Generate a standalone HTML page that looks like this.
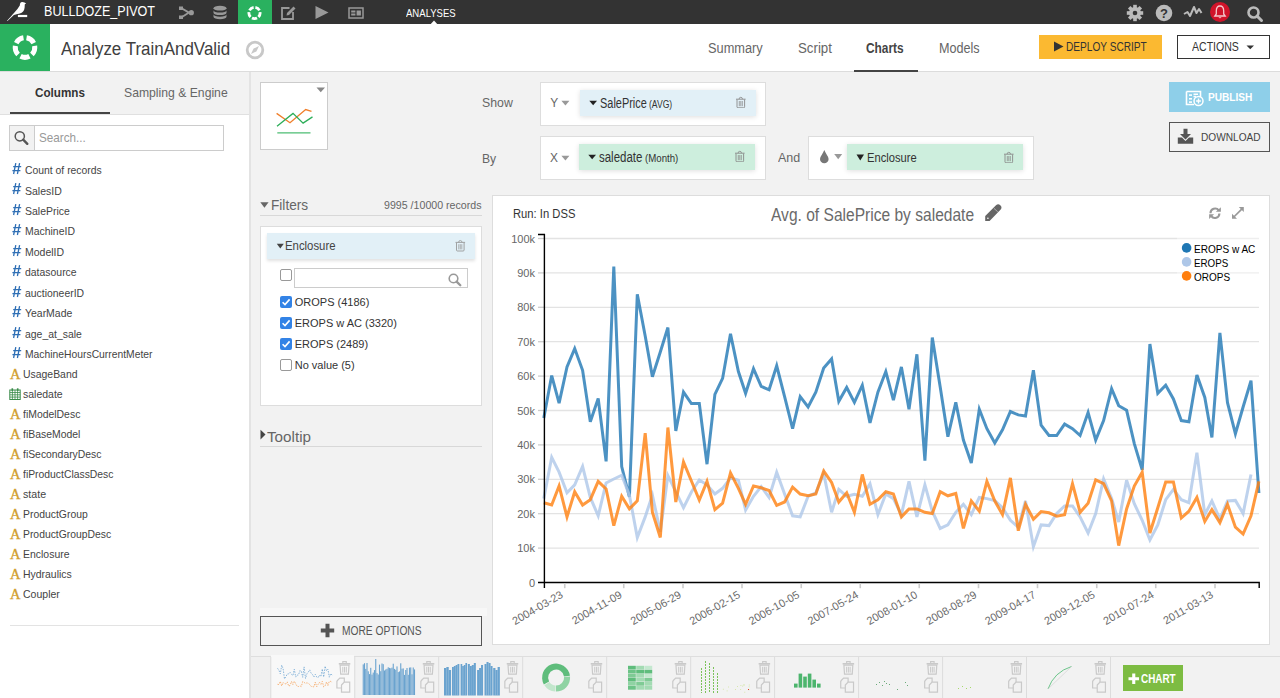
<!DOCTYPE html>
<html><head><meta charset="utf-8"><style>
html,body{margin:0;padding:0;width:1280px;height:698px;overflow:hidden;background:#f2f2f2}
body{position:relative;font-family:"Liberation Sans",sans-serif}
.t{position:absolute;white-space:nowrap;line-height:1;transform-origin:0 0;font-family:"Liberation Sans",sans-serif}
.b{position:absolute;display:block}
</style></head><body>
<div class="b" style="left:0px;top:0px;width:1280px;height:698px;background:#f2f2f2"></div>
<div class="b" style="left:0px;top:0px;width:1280px;height:24px;background:#333"></div>
<svg class="b" style="left:0px;top:0px" width="36" height="24" viewBox="0 0 36 24"><path d="M6.9 20.9 L7.5 20.9 L13.9 14.9 C15.5 14.4 17.5 14.1 19.8 13.6 C22.6 12.9 24.2 11 24.6 7.8 L24.8 4.3 L26.1 3.4 C25.2 2.7 24 1.9 22.2 1.9 C20.7 1.9 19.9 3 19.8 5.4 C17.5 9.5 11.5 15.5 6.9 20.9 Z" fill="#fff"/><rect x="17.9" y="14.9" width="9.3" height="2.2" fill="#fff"/></svg>
<div class="t" style="left:44.05px;top:3.36px;font-size:15.41px;font-weight:400;color:#fff;transform:scaleX(0.8154);">BULLDOZE_PIVOT</div>
<svg class="b" style="left:178px;top:5px" width="18" height="16" viewBox="0 0 18 16"><rect x="1" y="1.5" width="4" height="3.5" fill="#999"/><rect x="1" y="10.5" width="4" height="3.5" fill="#999"/><path d="M4 3.5 L11 7.6 L4 12" stroke="#999" stroke-width="1.8" fill="none"/><circle cx="13.3" cy="7.7" r="2.6" fill="#999"/></svg>
<svg class="b" style="left:212px;top:5px" width="16" height="16" viewBox="0 0 16 16"><ellipse cx="8" cy="3.2" rx="6.5" ry="2.4" fill="#999"/><path d="M1.5 5.2 v2.5 a6.5 2.4 0 0 0 13 0 v-2.5 a6.5 2.4 0 0 1 -13 0z" fill="#999"/><path d="M1.5 9.3 v2.5 a6.5 2.4 0 0 0 13 0 v-2.5 a6.5 2.4 0 0 1 -13 0z" fill="#999"/></svg>
<div class="b" style="left:238px;top:0px;width:34px;height:24px;background:#2ab15f"></div>
<svg class="b" style="left:238px;top:0px" width="34" height="24" viewBox="0 0 34 24"><path d="M17.38 7.47 A5.6 5.6 0 0 1 21.49 10.46 M22.03 12.12 A5.6 5.6 0 0 1 20.46 16.96 M19.04 17.99 A5.6 5.6 0 0 1 13.96 17.99 M12.54 16.96 A5.6 5.6 0 0 1 10.97 12.12 M11.51 10.46 A5.6 5.6 0 0 1 15.62 7.47" stroke="#fff" stroke-width="2.8" fill="none"/></svg>
<svg class="b" style="left:280px;top:5px" width="17" height="16" viewBox="0 0 17 16"><path d="M9.5 3 H2 V14 H13 V7" stroke="#999" stroke-width="1.8" fill="none"/><path d="M6.5 10.5 L7 8 L13.5 1.5 L15.5 3.5 L9 10 Z" fill="#999"/></svg>
<svg class="b" style="left:314px;top:5px" width="16" height="16" viewBox="0 0 16 16"><path d="M1.5 1 L14.5 7.5 L1.5 14 Z" fill="#999"/></svg>
<svg class="b" style="left:348px;top:7px" width="17" height="12" viewBox="0 0 17 12"><rect x="1" y="1" width="14" height="10" stroke="#999" stroke-width="1.5" fill="none"/><rect x="3.2" y="3.5" width="4.2" height="2" fill="#999"/><rect x="3.2" y="6.5" width="4.2" height="2" fill="#999"/><rect x="8.6" y="3.5" width="4.3" height="5" fill="#999"/></svg>
<div class="t" style="left:405.73px;top:7.98px;font-size:11.48px;font-weight:400;color:#fff;transform:scaleX(0.8324);">ANALYSES</div>
<svg class="b" style="left:430px;top:20px" width="8" height="4" viewBox="0 0 8 4"><path d="M0.8 4 L4 0.6 L7.2 4 Z" fill="#fff"/></svg>
<svg class="b" style="left:1126px;top:4px" width="18" height="18" viewBox="0 0 18 18"><g fill="#bbb"><circle cx="9" cy="9" r="6"/><rect x="7.2" y="0.8" width="3.6" height="4" transform="rotate(0 9 9)"/><rect x="7.2" y="0.8" width="3.6" height="4" transform="rotate(45 9 9)"/><rect x="7.2" y="0.8" width="3.6" height="4" transform="rotate(90 9 9)"/><rect x="7.2" y="0.8" width="3.6" height="4" transform="rotate(135 9 9)"/><rect x="7.2" y="0.8" width="3.6" height="4" transform="rotate(180 9 9)"/><rect x="7.2" y="0.8" width="3.6" height="4" transform="rotate(225 9 9)"/><rect x="7.2" y="0.8" width="3.6" height="4" transform="rotate(270 9 9)"/><rect x="7.2" y="0.8" width="3.6" height="4" transform="rotate(315 9 9)"/></g><circle cx="9" cy="9" r="2.3" fill="#333"/></svg>
<svg class="b" style="left:1155px;top:4px" width="18" height="18" viewBox="0 0 18 18"><circle cx="9" cy="9" r="8.3" fill="#bbb"/><text x="9" y="13.6" text-anchor="middle" font-family="Liberation Sans" font-weight="700" font-size="13" fill="#333">?</text></svg>
<svg class="b" style="left:1183px;top:4px" width="20" height="14" viewBox="0 0 20 14"><path d="M1 10 L4.5 8 L7 12 L11 3 L13.5 9 L16 5 L18.5 9" stroke="#bbb" stroke-width="2" fill="none" stroke-linejoin="round"/></svg>
<svg class="b" style="left:1210px;top:2px" width="20" height="20" viewBox="0 0 20 20"><circle cx="10" cy="10" r="10" fill="#d0142a"/><path d="M10 4 C7 4 6.3 6.5 6.3 9 L6.3 12 L4.8 14 L15.2 14 L13.7 12 L13.7 9 C13.7 6.5 13 4 10 4Z" fill="none" stroke="#f4c9cd" stroke-width="1.3"/><path d="M8.5 15.2 a1.6 1.6 0 0 0 3 0z" fill="#f4c9cd"/></svg>
<svg class="b" style="left:1246px;top:5px" width="18" height="18" viewBox="0 0 18 18"><circle cx="7.5" cy="7.5" r="5" stroke="#bbb" stroke-width="2.6" fill="none"/><path d="M11 11 L15.5 15.5" stroke="#bbb" stroke-width="3" stroke-linecap="round"/></svg>
<div class="b" style="left:0px;top:24px;width:1280px;height:47px;background:#fff"></div>
<div class="b" style="left:0px;top:71px;width:1280px;height:1px;background:#dcdcdc"></div>
<div class="b" style="left:0px;top:24px;width:50px;height:47px;background:#2ab15f"></div>
<svg class="b" style="left:0px;top:24px" width="50" height="47" viewBox="0 0 50 47"><path d="M26.53 13.82 A9.8 9.8 0 0 1 33.73 19.05 M34.68 21.97 A9.8 9.8 0 0 1 31.93 30.43 M29.45 32.23 A9.8 9.8 0 0 1 20.55 32.23 M18.07 30.43 A9.8 9.8 0 0 1 15.32 21.97 M16.27 19.05 A9.8 9.8 0 0 1 23.47 13.82" stroke="#fff" stroke-width="5" fill="none"/></svg>
<div class="t" style="left:60.98px;top:40.04px;font-size:18.02px;font-weight:400;color:#404040;transform:scaleX(0.9408);">Analyze TrainAndValid</div>
<svg class="b" style="left:245px;top:40px" width="20" height="20" viewBox="0 0 20 20"><circle cx="10" cy="10" r="7.8" stroke="#c8c8c8" stroke-width="2.8" fill="none"/><path d="M14 6 L11.4 11.4 L6 14 L8.6 8.6 Z" fill="#c8c8c8"/></svg>
<div class="t" style="left:707.83px;top:42.21px;font-size:13.81px;font-weight:400;color:#666;transform:scaleX(0.9263);">Summary</div>
<div class="t" style="left:797.70px;top:42.21px;font-size:13.81px;font-weight:400;color:#666;transform:scaleX(0.9622);">Script</div>
<div class="t" style="left:866.49px;top:42.21px;font-size:13.81px;font-weight:700;color:#444;transform:scaleX(0.8608);">Charts</div>
<div class="t" style="left:939.34px;top:42.21px;font-size:13.81px;font-weight:400;color:#666;transform:scaleX(0.9145);">Models</div>
<div class="b" style="left:854px;top:70px;width:64px;height:2px;background:#444"></div>
<div class="b" style="left:1039px;top:35px;width:123px;height:24px;background:#fbb931"></div>
<svg class="b" style="left:1053px;top:41px" width="12" height="12" viewBox="0 0 12 12"><path d="M1 0.5 L10.5 5.5 L1 10.5Z" fill="#333"/></svg>
<div class="t" style="left:1066.09px;top:41.46px;font-size:12.21px;font-weight:400;color:#333;transform:scaleX(0.8290);">DEPLOY SCRIPT</div>
<div class="b" style="left:1177px;top:35px;width:93px;height:24px;border:1.5px solid #333;box-sizing:border-box;background:#fff"></div>
<div class="t" style="left:1192.37px;top:41.46px;font-size:12.21px;font-weight:400;color:#333;transform:scaleX(0.8632);">ACTIONS</div>
<svg class="b" style="left:1246px;top:45px" width="9" height="5" viewBox="0 0 9 5"><path d="M0.5 0.5 L8 0.5 L4.25 4.2Z" fill="#333"/></svg>
<div class="b" style="left:0px;top:72px;width:250px;height:626px;background:#fff"></div>
<div class="b" style="left:0px;top:72px;width:250px;height:42px;background:#f2f2f2"></div>
<div class="b" style="left:0px;top:114px;width:250px;height:1px;background:#e0e0e0"></div>
<div class="b" style="left:249px;top:72px;width:2px;height:626px;background:#e3e3e3"></div>
<div class="t" style="left:34.70px;top:86.75px;font-size:12.94px;font-weight:700;color:#333;transform:scaleX(0.9023);">Columns</div>
<div class="t" style="left:123.77px;top:86.75px;font-size:12.94px;font-weight:400;color:#666;transform:scaleX(0.9422);">Sampling &amp; Engine</div>
<div class="b" style="left:10px;top:112px;width:100px;height:2px;background:#444"></div>
<div class="b" style="left:9px;top:125px;width:215px;height:26px;border:1px solid #ccc;box-sizing:border-box;background:#fff"></div>
<div class="b" style="left:10px;top:126px;width:24px;height:24px;background:#f2f2f2;border-right:1px solid #ccc"></div>
<svg class="b" style="left:13px;top:130px" width="18" height="16" viewBox="0 0 18 16"><circle cx="6.8" cy="6.3" r="4.6" stroke="#555" stroke-width="1.5" fill="none"/><path d="M10.2 9.7 L14.3 13.8" stroke="#555" stroke-width="2.4" stroke-linecap="round"/></svg>
<div class="t" style="left:38.80px;top:131.08px;font-size:13.37px;font-weight:400;color:#999;transform:scaleX(0.8752);">Search...</div>
<svg class="b" style="left:11px;top:161.6px" width="11" height="13" viewBox="0 0 11 13"><path d="M4.8 1.2 L2.6 12 M8.6 1.2 L6.4 12 M2.2 4.6 H10.2 M1.4 8.6 H9.4" stroke="#2f6fb5" stroke-width="1.3" fill="none"/></svg>
<div class="t" style="left:24.88px;top:164.83px;font-size:11.19px;font-weight:400;color:#444;transform:scaleX(0.9280);">Count of records</div>
<svg class="b" style="left:11px;top:182.3px" width="11" height="13" viewBox="0 0 11 13"><path d="M4.8 1.2 L2.6 12 M8.6 1.2 L6.4 12 M2.2 4.6 H10.2 M1.4 8.6 H9.4" stroke="#2f6fb5" stroke-width="1.3" fill="none"/></svg>
<div class="t" style="left:24.87px;top:185.53px;font-size:11.19px;font-weight:400;color:#444;transform:scaleX(0.9395);">SalesID</div>
<svg class="b" style="left:11px;top:202.9px" width="11" height="13" viewBox="0 0 11 13"><path d="M4.8 1.2 L2.6 12 M8.6 1.2 L6.4 12 M2.2 4.6 H10.2 M1.4 8.6 H9.4" stroke="#2f6fb5" stroke-width="1.3" fill="none"/></svg>
<div class="t" style="left:24.87px;top:206.13px;font-size:11.19px;font-weight:400;color:#444;transform:scaleX(0.9355);">SalePrice</div>
<svg class="b" style="left:11px;top:223.2px" width="11" height="13" viewBox="0 0 11 13"><path d="M4.8 1.2 L2.6 12 M8.6 1.2 L6.4 12 M2.2 4.6 H10.2 M1.4 8.6 H9.4" stroke="#2f6fb5" stroke-width="1.3" fill="none"/></svg>
<div class="t" style="left:24.87px;top:226.43px;font-size:11.19px;font-weight:400;color:#444;transform:scaleX(0.9336);">MachineID</div>
<svg class="b" style="left:11px;top:243.8px" width="11" height="13" viewBox="0 0 11 13"><path d="M4.8 1.2 L2.6 12 M8.6 1.2 L6.4 12 M2.2 4.6 H10.2 M1.4 8.6 H9.4" stroke="#2f6fb5" stroke-width="1.3" fill="none"/></svg>
<div class="t" style="left:24.87px;top:247.03px;font-size:11.19px;font-weight:400;color:#444;transform:scaleX(0.9382);">ModelID</div>
<svg class="b" style="left:11px;top:264.1px" width="11" height="13" viewBox="0 0 11 13"><path d="M4.8 1.2 L2.6 12 M8.6 1.2 L6.4 12 M2.2 4.6 H10.2 M1.4 8.6 H9.4" stroke="#2f6fb5" stroke-width="1.3" fill="none"/></svg>
<div class="t" style="left:24.87px;top:267.33px;font-size:11.19px;font-weight:400;color:#444;transform:scaleX(0.9331);">datasource</div>
<svg class="b" style="left:11px;top:284.7px" width="11" height="13" viewBox="0 0 11 13"><path d="M4.8 1.2 L2.6 12 M8.6 1.2 L6.4 12 M2.2 4.6 H10.2 M1.4 8.6 H9.4" stroke="#2f6fb5" stroke-width="1.3" fill="none"/></svg>
<div class="t" style="left:24.87px;top:287.93px;font-size:11.19px;font-weight:400;color:#444;transform:scaleX(0.9311);">auctioneerID</div>
<svg class="b" style="left:11px;top:305.0px" width="11" height="13" viewBox="0 0 11 13"><path d="M4.8 1.2 L2.6 12 M8.6 1.2 L6.4 12 M2.2 4.6 H10.2 M1.4 8.6 H9.4" stroke="#2f6fb5" stroke-width="1.3" fill="none"/></svg>
<div class="t" style="left:24.87px;top:308.23px;font-size:11.19px;font-weight:400;color:#444;transform:scaleX(0.9345);">YearMade</div>
<svg class="b" style="left:11px;top:325.7px" width="11" height="13" viewBox="0 0 11 13"><path d="M4.8 1.2 L2.6 12 M8.6 1.2 L6.4 12 M2.2 4.6 H10.2 M1.4 8.6 H9.4" stroke="#2f6fb5" stroke-width="1.3" fill="none"/></svg>
<div class="t" style="left:24.87px;top:328.93px;font-size:11.19px;font-weight:400;color:#444;transform:scaleX(0.9317);">age_at_sale</div>
<svg class="b" style="left:11px;top:346.0px" width="11" height="13" viewBox="0 0 11 13"><path d="M4.8 1.2 L2.6 12 M8.6 1.2 L6.4 12 M2.2 4.6 H10.2 M1.4 8.6 H9.4" stroke="#2f6fb5" stroke-width="1.3" fill="none"/></svg>
<div class="t" style="left:24.88px;top:349.23px;font-size:11.19px;font-weight:400;color:#444;transform:scaleX(0.9240);">MachineHoursCurrentMeter</div>
<div class="t" style="left:10.1px;top:366.90px;font-family:'Liberation Serif',serif;font-size:14.5px;line-height:14.5px;color:#d19e2e;font-weight:400;-webkit-text-stroke:0.35px #d19e2e">A</div>
<div class="t" style="left:22.87px;top:368.93px;font-size:11.19px;font-weight:400;color:#444;transform:scaleX(0.9323);">UsageBand</div>
<svg class="b" style="left:9px;top:387.7px" width="12" height="12" viewBox="0 0 12 12"><rect x="0.8" y="2" width="10.4" height="9.5" fill="none" stroke="#3a8c4a" stroke-width="1"/><path d="M0.8 4.5 H11.2 M0.8 6.8 H11.2 M0.8 9.1 H11.2 M3.4 2 V11.5 M6 2 V11.5 M8.6 2 V11.5" stroke="#3a8c4a" stroke-width="0.8"/><rect x="2.5" y="0.3" width="1.6" height="2.5" fill="#3a8c4a"/><rect x="7.9" y="0.3" width="1.6" height="2.5" fill="#3a8c4a"/></svg>
<div class="t" style="left:22.87px;top:388.93px;font-size:11.19px;font-weight:400;color:#444;transform:scaleX(0.9378);">saledate</div>
<div class="t" style="left:10.1px;top:406.90px;font-family:'Liberation Serif',serif;font-size:14.5px;line-height:14.5px;color:#d19e2e;font-weight:400;-webkit-text-stroke:0.35px #d19e2e">A</div>
<div class="t" style="left:22.87px;top:408.93px;font-size:11.19px;font-weight:400;color:#444;transform:scaleX(0.9315);">fiModelDesc</div>
<div class="t" style="left:10.1px;top:426.90px;font-family:'Liberation Serif',serif;font-size:14.5px;line-height:14.5px;color:#d19e2e;font-weight:400;-webkit-text-stroke:0.35px #d19e2e">A</div>
<div class="t" style="left:22.87px;top:428.93px;font-size:11.19px;font-weight:400;color:#444;transform:scaleX(0.9315);">fiBaseModel</div>
<div class="t" style="left:10.1px;top:446.90px;font-family:'Liberation Serif',serif;font-size:14.5px;line-height:14.5px;color:#d19e2e;font-weight:400;-webkit-text-stroke:0.35px #d19e2e">A</div>
<div class="t" style="left:22.88px;top:448.93px;font-size:11.19px;font-weight:400;color:#444;transform:scaleX(0.9278);">fiSecondaryDesc</div>
<div class="t" style="left:10.1px;top:467.00px;font-family:'Liberation Serif',serif;font-size:14.5px;line-height:14.5px;color:#d19e2e;font-weight:400;-webkit-text-stroke:0.35px #d19e2e">A</div>
<div class="t" style="left:22.88px;top:469.03px;font-size:11.19px;font-weight:400;color:#444;transform:scaleX(0.9265);">fiProductClassDesc</div>
<div class="t" style="left:10.1px;top:487.00px;font-family:'Liberation Serif',serif;font-size:14.5px;line-height:14.5px;color:#d19e2e;font-weight:400;-webkit-text-stroke:0.35px #d19e2e">A</div>
<div class="t" style="left:22.86px;top:489.03px;font-size:11.19px;font-weight:400;color:#444;transform:scaleX(0.9532);">state</div>
<div class="t" style="left:10.1px;top:507.00px;font-family:'Liberation Serif',serif;font-size:14.5px;line-height:14.5px;color:#d19e2e;font-weight:400;-webkit-text-stroke:0.35px #d19e2e">A</div>
<div class="t" style="left:22.88px;top:509.03px;font-size:11.19px;font-weight:400;color:#444;transform:scaleX(0.9299);">ProductGroup</div>
<div class="t" style="left:10.1px;top:527.10px;font-family:'Liberation Serif',serif;font-size:14.5px;line-height:14.5px;color:#d19e2e;font-weight:400;-webkit-text-stroke:0.35px #d19e2e">A</div>
<div class="t" style="left:22.88px;top:529.13px;font-size:11.19px;font-weight:400;color:#444;transform:scaleX(0.9267);">ProductGroupDesc</div>
<div class="t" style="left:10.1px;top:546.70px;font-family:'Liberation Serif',serif;font-size:14.5px;line-height:14.5px;color:#d19e2e;font-weight:400;-webkit-text-stroke:0.35px #d19e2e">A</div>
<div class="t" style="left:22.87px;top:548.73px;font-size:11.19px;font-weight:400;color:#444;transform:scaleX(0.9348);">Enclosure</div>
<div class="t" style="left:10.1px;top:566.70px;font-family:'Liberation Serif',serif;font-size:14.5px;line-height:14.5px;color:#d19e2e;font-weight:400;-webkit-text-stroke:0.35px #d19e2e">A</div>
<div class="t" style="left:22.87px;top:568.73px;font-size:11.19px;font-weight:400;color:#444;transform:scaleX(0.9340);">Hydraulics</div>
<div class="t" style="left:10.1px;top:586.70px;font-family:'Liberation Serif',serif;font-size:14.5px;line-height:14.5px;color:#d19e2e;font-weight:400;-webkit-text-stroke:0.35px #d19e2e">A</div>
<div class="t" style="left:22.87px;top:588.73px;font-size:11.19px;font-weight:400;color:#444;transform:scaleX(0.9395);">Coupler</div>
<div class="b" style="left:10px;top:625px;width:229px;height:1px;background:#e3e3e3"></div>
<div class="b" style="left:260px;top:82px;width:68px;height:68px;border:1px solid #ccc;box-sizing:border-box;background:#fff"></div>
<svg class="b" style="left:316px;top:87px" width="10" height="6" viewBox="0 0 10 6"><path d="M0.5 0.5 L9 0.5 L4.75 5.3Z" fill="#888"/></svg>
<svg class="b" style="left:270px;top:104px" width="50" height="32" viewBox="0 0 50 32"><path d="M6.6 9.4 L20 18.7 L35.7 5.6 L41.5 7.4" stroke="#f07f2b" stroke-width="1.3" fill="none"/><path d="M7 22.2 L23 9.4 L33.1 19.1 L42.5 12.9" stroke="#2dae59" stroke-width="1.3" fill="none"/><path d="M7.3 28.9 H40.5" stroke="#4cbd73" stroke-width="1.3"/></svg>
<div class="t" style="left:481.96px;top:96.16px;font-size:13.52px;font-weight:400;color:#666;transform:scaleX(0.9104);">Show</div>
<div class="b" style="left:540px;top:82px;width:226px;height:44px;border:1px solid #ddd;box-sizing:border-box;background:#fff"></div>
<div class="t" style="left:550.28px;top:98.01px;font-size:11.92px;font-weight:400;color:#666;">Y</div>
<svg class="b" style="left:561px;top:100px" width="9" height="6" viewBox="0 0 9 6"><path d="M0.4 0.8 L8.4 0.8 L4.4 5.6Z" fill="#999"/></svg>
<div class="b" style="left:580px;top:90px;width:176px;height:26px;background:#e2f0f7;box-shadow:0 1px 5px rgba(0,0,0,0.13)"></div>
<svg class="b" style="left:589px;top:100px" width="9" height="6" viewBox="0 0 9 6"><path d="M0.3 0.8 L8 0.8 L4.15 5.2Z" fill="#222"/></svg>
<div class="t" style="left:599.84px;top:96.61px;font-size:13.81px;font-weight:400;color:#333;transform:scaleX(0.7932);">SalePrice</div>
<div class="t" style="left:648.99px;top:99.32px;font-size:10.61px;font-weight:400;color:#333;transform:scaleX(0.8082);">(AVG)</div>
<svg class="b" style="left:735px;top:95px" width="12" height="13" viewBox="0 0 12 13"><g transform="translate(1,1.8) scale(1.0)" fill="none" stroke="#888"><path d="M0 2.4 H9.6" stroke-width="0.9"/><path d="M3.1 2.4 Q3.1 0.5 4.8 0.5 Q6.5 0.5 6.5 2.4" stroke-width="0.8"/><path d="M1 2.8 V10 Q1 11 2 11 H7.6 Q8.6 11 8.6 10 V2.8" stroke-width="0.9"/><path d="M3.3 4.2 V9.4 M4.8 4.2 V9.4 M6.3 4.2 V9.4" stroke-width="0.75"/></g></svg>
<div class="t" style="left:481.77px;top:151.86px;font-size:13.52px;font-weight:400;color:#666;transform:scaleX(0.8983);">By</div>
<div class="b" style="left:540px;top:136px;width:226px;height:44px;border:1px solid #ddd;box-sizing:border-box;background:#fff"></div>
<div class="t" style="left:550.08px;top:153.21px;font-size:11.92px;font-weight:400;color:#666;">X</div>
<svg class="b" style="left:561px;top:155px" width="9" height="6" viewBox="0 0 9 6"><path d="M0.4 0.8 L8.4 0.8 L4.4 5.6Z" fill="#999"/></svg>
<div class="b" style="left:579px;top:144px;width:176px;height:26px;background:#cdeedd;box-shadow:0 1px 5px rgba(0,0,0,0.13)"></div>
<svg class="b" style="left:588px;top:154px" width="9" height="6" viewBox="0 0 9 6"><path d="M0.3 0.8 L8 0.8 L4.15 5.2Z" fill="#222"/></svg>
<div class="t" style="left:599.31px;top:151.11px;font-size:13.81px;font-weight:400;color:#333;transform:scaleX(0.8317);">saledate</div>
<div class="t" style="left:645.22px;top:153.45px;font-size:11.05px;font-weight:400;color:#333;transform:scaleX(0.8742);">(Month)</div>
<svg class="b" style="left:734px;top:149px" width="12" height="13" viewBox="0 0 12 13"><g transform="translate(1,1.8) scale(1.0)" fill="none" stroke="#888"><path d="M0 2.4 H9.6" stroke-width="0.9"/><path d="M3.1 2.4 Q3.1 0.5 4.8 0.5 Q6.5 0.5 6.5 2.4" stroke-width="0.8"/><path d="M1 2.8 V10 Q1 11 2 11 H7.6 Q8.6 11 8.6 10 V2.8" stroke-width="0.9"/><path d="M3.3 4.2 V9.4 M4.8 4.2 V9.4 M6.3 4.2 V9.4" stroke-width="0.75"/></g></svg>
<div class="t" style="left:777.55px;top:151.36px;font-size:13.52px;font-weight:400;color:#666;transform:scaleX(0.9229);">And</div>
<div class="b" style="left:808px;top:136px;width:226px;height:44px;border:1px solid #ddd;box-sizing:border-box;background:#fff"></div>
<svg class="b" style="left:819px;top:149px" width="11" height="15" viewBox="0 0 11 15"><path d="M5.3 1 C4 4.5 1 7.5 1 10 A4.3 4.3 0 0 0 9.6 10 C9.6 7.5 6.6 4.5 5.3 1Z" fill="#777"/></svg>
<svg class="b" style="left:834px;top:153px" width="9" height="7" viewBox="0 0 9 7"><path d="M0.2 0.9 L8.2 0.9 L4.2 6.2Z" fill="#999"/></svg>
<div class="b" style="left:847px;top:144px;width:176px;height:26px;background:#cdeedd;box-shadow:0 1px 5px rgba(0,0,0,0.13)"></div>
<svg class="b" style="left:856px;top:154px" width="9" height="7" viewBox="0 0 9 7"><path d="M0.5 0.6 L8 0.6 L4.25 6.4Z" fill="#222"/></svg>
<div class="t" style="left:867.13px;top:151.08px;font-size:13.37px;font-weight:400;color:#333;transform:scaleX(0.8357);">Enclosure</div>
<svg class="b" style="left:1003px;top:150px" width="12" height="13" viewBox="0 0 12 13"><g transform="translate(1,1.8) scale(1.0)" fill="none" stroke="#888"><path d="M0 2.4 H9.6" stroke-width="0.9"/><path d="M3.1 2.4 Q3.1 0.5 4.8 0.5 Q6.5 0.5 6.5 2.4" stroke-width="0.8"/><path d="M1 2.8 V10 Q1 11 2 11 H7.6 Q8.6 11 8.6 10 V2.8" stroke-width="0.9"/><path d="M3.3 4.2 V9.4 M4.8 4.2 V9.4 M6.3 4.2 V9.4" stroke-width="0.75"/></g></svg>
<div class="b" style="left:1169px;top:82px;width:101px;height:30px;background:#8ecfe9"></div>
<svg class="b" style="left:1185px;top:90px" width="20" height="17" viewBox="0 0 20 17"><path d="M1.5 1.5 H15.5 V7" stroke="#fff" stroke-width="1.6" fill="none"/><path d="M1.5 1.5 V14.5 H9" stroke="#fff" stroke-width="1.6" fill="none"/><rect x="4" y="4.3" width="3" height="1.6" fill="#fff"/><rect x="4" y="8" width="3" height="1.6" fill="#fff"/><rect x="4" y="11.3" width="3" height="1.6" fill="#fff"/><path d="M8.5 4.3 H13 M8.5 6.5 H11" stroke="#fff" stroke-width="1.4"/><circle cx="13.5" cy="11" r="4.5" fill="#8ecfe9" stroke="#fff" stroke-width="1.5"/><path d="M13.5 8.6 V13.4 M11.1 11 H15.9" stroke="#fff" stroke-width="1.4"/></svg>
<div class="t" style="left:1208.09px;top:92.28px;font-size:11.48px;font-weight:700;color:#fff;transform:scaleX(0.8811);">PUBLISH</div>
<div class="b" style="left:1169px;top:122px;width:101px;height:30px;border:1.5px solid #555;box-sizing:border-box;background:#f2f2f2"></div>
<svg class="b" style="left:1177px;top:128px" width="18" height="17" viewBox="0 0 18 17"><path d="M6.5 0.8 H10.5 V6 H14 L8.5 11.5 L3 6 H6.5Z" fill="#555"/><path d="M0.8 9.5 H5 L8.5 13 L12 9.5 H16.2 V15.8 H0.8Z" fill="#555"/></svg>
<div class="t" style="left:1201.09px;top:132.27px;font-size:10.90px;font-weight:400;color:#444;transform:scaleX(0.9285);">DOWNLOAD</div>
<svg class="b" style="left:260px;top:202px" width="10" height="7" viewBox="0 0 10 7"><path d="M0.3 0.3 L8.6 0.3 L4.45 5.8Z" fill="#666"/></svg>
<div class="t" style="left:270.78px;top:197.48px;font-size:15.26px;font-weight:400;color:#666;transform:scaleX(0.8952);">Filters</div>
<div class="t" style="left:384.16px;top:200.48px;font-size:11.48px;font-weight:400;color:#666;transform:scaleX(0.9270);">9995 /10000 records</div>
<div class="b" style="left:260px;top:215px;width:222px;height:1px;background:#d8d8d8"></div>
<div class="b" style="left:260px;top:226px;width:222px;height:180px;border:1px solid #ddd;box-sizing:border-box;background:#fff"></div>
<div class="b" style="left:267px;top:233px;width:208px;height:26px;background:#e2f0f7;box-shadow:0 2px 3px rgba(0,0,0,0.12)"></div>
<svg class="b" style="left:276px;top:243px" width="9" height="7" viewBox="0 0 9 7"><path d="M0.8 0.8 L7.8 0.8 L4.3 5.6Z" fill="#444"/></svg>
<div class="t" style="left:285.42px;top:240.15px;font-size:12.94px;font-weight:400;color:#444;transform:scaleX(0.8780);">Enclosure</div>
<svg class="b" style="left:454px;top:239px" width="13" height="13" viewBox="0 0 13 13"><g transform="translate(1.5,1) scale(1.0)" fill="none" stroke="#999"><path d="M0 2.4 H9.6" stroke-width="0.9"/><path d="M3.1 2.4 Q3.1 0.5 4.8 0.5 Q6.5 0.5 6.5 2.4" stroke-width="0.8"/><path d="M1 2.8 V10 Q1 11 2 11 H7.6 Q8.6 11 8.6 10 V2.8" stroke-width="0.9"/><path d="M3.3 4.2 V9.4 M4.8 4.2 V9.4 M6.3 4.2 V9.4" stroke-width="0.75"/></g></svg>
<div class="b" style="left:280px;top:269px;width:12px;height:12px;border:1px solid #999;border-radius:2px;box-sizing:border-box;background:#fff"></div>
<div class="b" style="left:294px;top:268px;width:174px;height:20px;border:1px solid #ccc;box-sizing:border-box;background:#fff"></div>
<svg class="b" style="left:447px;top:272px" width="16" height="15" viewBox="0 0 16 15"><circle cx="6.5" cy="6.5" r="4.3" stroke="#999" stroke-width="1.6" fill="none"/><path d="M9.6 9.6 L13.3 13.3" stroke="#999" stroke-width="2.3" stroke-linecap="round"/></svg>
<svg class="b" style="left:280px;top:296px" width="12" height="12" viewBox="0 0 12 12"><rect x="0" y="0" width="12" height="12" rx="2" fill="#3383e6"/><path d="M2.6 6.2 L5 8.6 L9.6 3.4" stroke="#fff" stroke-width="1.6" fill="none"/></svg>
<div class="t" style="left:294.74px;top:296.59px;font-size:11.00px;font-weight:400;color:#333;">OROPS (4186)</div>
<svg class="b" style="left:280px;top:317.2px" width="12" height="12" viewBox="0 0 12 12"><rect x="0" y="0" width="12" height="12" rx="2" fill="#3383e6"/><path d="M2.6 6.2 L5 8.6 L9.6 3.4" stroke="#fff" stroke-width="1.6" fill="none"/></svg>
<div class="t" style="left:294.74px;top:317.79px;font-size:11.00px;font-weight:400;color:#333;">EROPS w AC (3320)</div>
<svg class="b" style="left:280px;top:338px" width="12" height="12" viewBox="0 0 12 12"><rect x="0" y="0" width="12" height="12" rx="2" fill="#3383e6"/><path d="M2.6 6.2 L5 8.6 L9.6 3.4" stroke="#fff" stroke-width="1.6" fill="none"/></svg>
<div class="t" style="left:294.74px;top:338.59px;font-size:11.00px;font-weight:400;color:#333;">EROPS (2489)</div>
<div class="b" style="left:280px;top:359.3px;width:12px;height:12.0px;border:1px solid #999;border-radius:2px;box-sizing:border-box;background:#fff"></div>
<div class="t" style="left:294.74px;top:359.89px;font-size:11.00px;font-weight:400;color:#333;">No value (5)</div>
<svg class="b" style="left:260px;top:429px" width="6" height="12" viewBox="0 0 6 12"><path d="M0.5 0.8 L5.5 5.6 L0.5 10.4Z" fill="#444"/></svg>
<div class="t" style="left:266.99px;top:429.16px;font-size:15.41px;font-weight:400;color:#666;transform:scaleX(0.9884);">Tooltip</div>
<div class="b" style="left:260px;top:446px;width:222px;height:1px;background:#d8d8d8"></div>
<div class="b" style="left:260px;top:608px;width:227px;height:8px;background:#f7f7f7"></div>
<div class="b" style="left:260px;top:616px;width:222px;height:30px;border:1px solid #555;box-sizing:border-box;background:#f2f2f2"></div>
<svg class="b" style="left:320px;top:623px" width="16" height="16" viewBox="0 0 16 16"><path d="M5.5 0.8 H9.5 V5.5 H14.2 V9.5 H9.5 V14.2 H5.5 V9.5 H0.8 V5.5 H5.5Z" fill="#555"/></svg>
<div class="t" style="left:341.79px;top:624.97px;font-size:12.79px;font-weight:400;color:#555;transform:scaleX(0.8003);">MORE OPTIONS</div>
<div class="b" style="left:492px;top:195px;width:778px;height:450px;border:1px solid #ddd;box-sizing:border-box;background:#fff"></div>
<div class="t" style="left:513.08px;top:207.97px;font-size:12.50px;font-weight:400;color:#333;transform:scaleX(0.8981);">Run: In DSS</div>
<div class="t" style="left:771.27px;top:206.54px;font-size:17.44px;font-weight:400;color:#6a6a6a;transform:scaleX(0.8928);">Avg. of SalePrice by saledate</div>
<svg class="b" style="left:976px;top:198px" width="32" height="28" viewBox="0 0 32 28"><path d="M9.2 22.9 H13.6 L24.7 11.6 A3.2 3.2 0 0 0 20 7.3 L9.2 18 Z" fill="#666"/><path d="M18 10.4 L21.8 13.9" stroke="#ddd" stroke-width="0.6"/><circle cx="11.9" cy="20.3" r="0.8" fill="#fff"/></svg>
<svg class="b" style="left:1209px;top:207px" width="13" height="13" viewBox="0 0 13 13"><path d="M1.5 6.2 A4.6 4.6 0 0 1 9.8 3.4" stroke="#999" stroke-width="2.1" fill="none"/><path d="M6.8 4.8 L11.9 4.8 L11.9 0.2 Z" fill="#999"/><path d="M10.4 6.4 A4.6 4.6 0 0 1 2.2 9.2" stroke="#999" stroke-width="2.1" fill="none"/><path d="M5.1 7.3 L0.1 7.3 L0.1 11.9 Z" fill="#999"/></svg>
<svg class="b" style="left:1232px;top:207px" width="12" height="12" viewBox="0 0 12 12"><path d="M6.8 0 H11.8 V5 Z M0 6.8 V11.8 H5 Z" fill="#999"/><path d="M10 1.8 L1.8 10" stroke="#999" stroke-width="1.7"/></svg>
<svg class="b" style="left:0;top:0" width="1280" height="698"><line x1="545" y1="548.10" x2="1259" y2="548.10" stroke="#e3e3e3" stroke-width="1.3"/><line x1="538" y1="548.10" x2="545" y2="548.10" stroke="#ccc" stroke-width="1.3"/><line x1="545" y1="513.70" x2="1259" y2="513.70" stroke="#e3e3e3" stroke-width="1.3"/><line x1="538" y1="513.70" x2="545" y2="513.70" stroke="#ccc" stroke-width="1.3"/><line x1="545" y1="479.30" x2="1259" y2="479.30" stroke="#e3e3e3" stroke-width="1.3"/><line x1="538" y1="479.30" x2="545" y2="479.30" stroke="#ccc" stroke-width="1.3"/><line x1="545" y1="444.90" x2="1259" y2="444.90" stroke="#e3e3e3" stroke-width="1.3"/><line x1="538" y1="444.90" x2="545" y2="444.90" stroke="#ccc" stroke-width="1.3"/><line x1="545" y1="410.50" x2="1259" y2="410.50" stroke="#e3e3e3" stroke-width="1.3"/><line x1="538" y1="410.50" x2="545" y2="410.50" stroke="#ccc" stroke-width="1.3"/><line x1="545" y1="376.10" x2="1259" y2="376.10" stroke="#e3e3e3" stroke-width="1.3"/><line x1="538" y1="376.10" x2="545" y2="376.10" stroke="#ccc" stroke-width="1.3"/><line x1="545" y1="341.70" x2="1259" y2="341.70" stroke="#e3e3e3" stroke-width="1.3"/><line x1="538" y1="341.70" x2="545" y2="341.70" stroke="#ccc" stroke-width="1.3"/><line x1="545" y1="307.30" x2="1259" y2="307.30" stroke="#e3e3e3" stroke-width="1.3"/><line x1="538" y1="307.30" x2="545" y2="307.30" stroke="#ccc" stroke-width="1.3"/><line x1="545" y1="272.90" x2="1259" y2="272.90" stroke="#e3e3e3" stroke-width="1.3"/><line x1="538" y1="272.90" x2="545" y2="272.90" stroke="#ccc" stroke-width="1.3"/><line x1="545" y1="238.50" x2="1259" y2="238.50" stroke="#e3e3e3" stroke-width="1.3"/><line x1="538" y1="238.50" x2="545" y2="238.50" stroke="#ccc" stroke-width="1.3"/><rect x="1177" y="236" width="82" height="48" fill="#fff" fill-opacity="0.4"/><polyline points="543.8,418.0 551.7,375.6 559.1,403.1 567.0,366.9 574.7,348.6 582.6,370.3 590.3,421.8 598.2,398.5 606.1,461.4 613.8,266.5 621.7,466.5 629.4,497.0 637.3,294.2 645.2,336.0 652.4,376.8 660.3,352.0 667.9,327.5 675.8,431.0 683.5,392.1 691.4,403.6 699.3,403.6 707.0,464.2 714.9,394.4 722.6,378.4 730.5,333.7 738.4,371.5 745.6,393.3 753.5,368.7 761.2,386.4 769.1,389.8 776.7,365.8 784.6,396.7 792.6,428.7 800.2,396.7 808.1,407.0 815.8,392.1 823.7,368.0 831.6,358.9 838.8,401.3 846.7,387.5 854.4,402.4 862.3,385.2 870.0,422.9 877.9,392.1 885.8,371.5 893.4,400.1 901.4,366.9 909.0,409.2 916.9,354.3 924.9,460.7 932.3,337.6 940.2,387.0 947.9,436.7 955.8,402.3 963.4,440.1 971.3,463.0 979.3,409.2 986.9,428.7 994.8,443.0 1002.5,429.8 1010.4,411.5 1018.3,414.9 1025.5,416.0 1033.4,370.3 1041.1,425.2 1049.0,435.5 1056.7,435.5 1064.6,424.1 1072.5,428.7 1080.1,435.5 1088.1,412.6 1095.7,440.1 1103.6,420.6 1111.6,388.7 1118.7,405.7 1126.6,410.3 1134.3,443.6 1142.2,469.9 1149.9,344.0 1157.8,393.3 1165.7,385.2 1173.4,399.0 1181.3,420.6 1188.9,421.8 1196.9,374.9 1204.8,397.5 1211.9,437.5 1219.9,332.9 1227.5,402.7 1235.4,433.7 1243.1,407.0 1251.0,380.7 1258.9,493.0" fill="none" stroke="#1f77b4" stroke-opacity="0.8" stroke-width="3" stroke-linejoin="miter" stroke-miterlimit="4"/><polyline points="543.8,498.6 551.7,457.3 559.1,472.2 567.0,492.8 574.7,484.8 582.6,466.5 590.3,497.4 598.2,515.8 606.1,483.0 613.8,479.0 621.7,475.2 629.4,495.1 637.3,537.5 645.2,516.9 652.4,495.1 660.3,531.8 667.9,475.6 675.8,491.7 683.5,507.7 691.4,492.0 699.3,480.0 707.0,484.8 714.9,494.0 722.6,488.3 730.5,477.9 738.4,480.2 745.6,510.0 753.5,496.3 761.2,486.6 769.1,497.4 776.7,472.2 784.6,494.0 792.6,515.8 800.2,516.9 808.1,496.3 815.8,492.8 823.7,473.4 831.6,512.3 838.8,489.4 846.7,496.3 854.4,494.4 862.3,496.3 870.0,483.7 877.9,514.6 885.8,494.0 893.4,498.6 901.4,514.6 909.0,481.4 916.9,516.9 924.9,484.8 932.3,511.2 940.2,528.4 947.9,524.9 955.8,512.3 963.4,504.3 971.3,514.6 979.3,497.4 986.9,498.6 994.8,500.6 1002.5,507.7 1010.4,520.3 1018.3,527.2 1025.5,500.9 1033.4,546.7 1041.1,524.9 1049.0,525.6 1056.7,513.5 1064.6,505.9 1072.5,505.9 1080.1,516.9 1088.1,533.0 1095.7,513.5 1103.6,479.0 1111.6,498.6 1118.7,522.0 1126.6,480.2 1134.3,503.7 1142.2,520.3 1149.9,540.0 1157.8,524.9 1165.7,499.7 1173.4,489.4 1181.3,499.7 1188.9,502.7 1196.9,452.7 1204.8,514.6 1211.9,500.9 1219.9,519.2 1227.5,500.9 1235.4,500.4 1243.1,513.5 1251.0,474.5" fill="none" stroke="#aec7e8" stroke-opacity="0.8" stroke-width="3" stroke-linejoin="miter" stroke-miterlimit="4"/><polyline points="543.8,502.7 551.7,505.0 559.1,486.0 567.0,516.9 574.7,491.7 582.6,505.0 590.3,499.7 598.2,481.4 606.1,489.0 613.8,525.6 621.7,496.3 629.4,508.9 637.3,500.9 645.2,433.2 652.4,512.3 660.3,537.5 667.9,427.5 675.8,502.0 683.5,461.9 691.4,481.0 699.3,500.0 707.0,481.4 714.9,509.6 722.6,503.2 730.5,472.9 738.4,488.3 745.6,504.3 753.5,486.0 761.2,487.8 769.1,490.5 776.7,505.4 784.6,502.0 792.6,487.1 800.2,494.0 808.1,495.8 815.8,494.0 823.7,471.1 831.6,482.5 838.8,502.0 846.7,492.8 854.4,512.3 862.3,474.5 870.0,504.3 877.9,499.7 885.8,491.7 893.4,494.0 901.4,516.9 909.0,508.9 916.9,508.9 924.9,512.3 932.3,513.5 940.2,491.7 947.9,495.8 955.8,493.5 963.4,528.4 971.3,500.9 979.3,511.2 986.9,481.4 994.8,501.0 1002.5,514.6 1010.4,477.9 1018.3,530.7 1025.5,504.3 1033.4,519.2 1041.1,511.6 1049.0,512.8 1056.7,516.2 1064.6,514.6 1072.5,483.7 1080.1,512.3 1088.1,503.2 1095.7,479.8 1103.6,483.7 1111.6,500.9 1118.7,545.6 1126.6,509.0 1134.3,486.0 1142.2,472.2 1149.9,533.0 1157.8,507.7 1165.7,482.0 1173.4,482.0 1181.3,518.0 1188.9,511.2 1196.9,497.4 1204.8,521.5 1211.9,509.6 1219.9,522.6 1227.5,504.3 1235.4,527.2 1243.1,534.1 1251.0,515.8 1258.9,481.4" fill="none" stroke="#ff7f0e" stroke-opacity="0.8" stroke-width="3" stroke-linejoin="miter" stroke-miterlimit="4"/><path d="M538 234.5 H544.4 V588" stroke="#000" stroke-width="1.4" fill="none"/><path d="M538 582.5 H1259.2 V588" stroke="#000" stroke-width="1.4" fill="none"/><line x1="564.75" y1="583.2" x2="564.75" y2="588.2" stroke="#ccc" stroke-width="1.6"/><text x="563.75" y="597.00" transform="rotate(-30 563.75 597)" text-anchor="end" font-family="Liberation Sans" font-size="11" fill="#6a6a6a">2004-03-23</text><line x1="623.75" y1="583.2" x2="623.75" y2="588.2" stroke="#ccc" stroke-width="1.6"/><text x="622.75" y="597.00" transform="rotate(-30 622.75 597)" text-anchor="end" font-family="Liberation Sans" font-size="11" fill="#6a6a6a">2004-11-09</text><line x1="683.00" y1="583.2" x2="683.00" y2="588.2" stroke="#ccc" stroke-width="1.6"/><text x="682.00" y="597.00" transform="rotate(-30 682.00 597)" text-anchor="end" font-family="Liberation Sans" font-size="11" fill="#6a6a6a">2005-06-29</text><line x1="742.00" y1="583.2" x2="742.00" y2="588.2" stroke="#ccc" stroke-width="1.6"/><text x="741.00" y="597.00" transform="rotate(-30 741.00 597)" text-anchor="end" font-family="Liberation Sans" font-size="11" fill="#6a6a6a">2006-02-15</text><line x1="801.25" y1="583.2" x2="801.25" y2="588.2" stroke="#ccc" stroke-width="1.6"/><text x="800.25" y="597.00" transform="rotate(-30 800.25 597)" text-anchor="end" font-family="Liberation Sans" font-size="11" fill="#6a6a6a">2006-10-05</text><line x1="860.25" y1="583.2" x2="860.25" y2="588.2" stroke="#ccc" stroke-width="1.6"/><text x="859.25" y="597.00" transform="rotate(-30 859.25 597)" text-anchor="end" font-family="Liberation Sans" font-size="11" fill="#6a6a6a">2007-05-24</text><line x1="919.25" y1="583.2" x2="919.25" y2="588.2" stroke="#ccc" stroke-width="1.6"/><text x="918.25" y="597.00" transform="rotate(-30 918.25 597)" text-anchor="end" font-family="Liberation Sans" font-size="11" fill="#6a6a6a">2008-01-10</text><line x1="978.50" y1="583.2" x2="978.50" y2="588.2" stroke="#ccc" stroke-width="1.6"/><text x="977.50" y="597.00" transform="rotate(-30 977.50 597)" text-anchor="end" font-family="Liberation Sans" font-size="11" fill="#6a6a6a">2008-08-29</text><line x1="1037.50" y1="583.2" x2="1037.50" y2="588.2" stroke="#ccc" stroke-width="1.6"/><text x="1036.50" y="597.00" transform="rotate(-30 1036.50 597)" text-anchor="end" font-family="Liberation Sans" font-size="11" fill="#6a6a6a">2009-04-17</text><line x1="1096.75" y1="583.2" x2="1096.75" y2="588.2" stroke="#ccc" stroke-width="1.6"/><text x="1095.75" y="597.00" transform="rotate(-30 1095.75 597)" text-anchor="end" font-family="Liberation Sans" font-size="11" fill="#6a6a6a">2009-12-05</text><line x1="1155.75" y1="583.2" x2="1155.75" y2="588.2" stroke="#ccc" stroke-width="1.6"/><text x="1154.75" y="597.00" transform="rotate(-30 1154.75 597)" text-anchor="end" font-family="Liberation Sans" font-size="11" fill="#6a6a6a">2010-07-24</text><line x1="1215.00" y1="583.2" x2="1215.00" y2="588.2" stroke="#ccc" stroke-width="1.6"/><text x="1214.00" y="597.00" transform="rotate(-30 1214.00 597)" text-anchor="end" font-family="Liberation Sans" font-size="11" fill="#6a6a6a">2011-03-13</text><text x="535" y="586.50" text-anchor="end" font-family="Liberation Sans" font-size="11" fill="#666">0</text><text x="535" y="552.10" text-anchor="end" font-family="Liberation Sans" font-size="11" fill="#666">10k</text><text x="535" y="517.70" text-anchor="end" font-family="Liberation Sans" font-size="11" fill="#666">20k</text><text x="535" y="483.30" text-anchor="end" font-family="Liberation Sans" font-size="11" fill="#666">30k</text><text x="535" y="448.90" text-anchor="end" font-family="Liberation Sans" font-size="11" fill="#666">40k</text><text x="535" y="414.50" text-anchor="end" font-family="Liberation Sans" font-size="11" fill="#666">50k</text><text x="535" y="380.10" text-anchor="end" font-family="Liberation Sans" font-size="11" fill="#666">60k</text><text x="535" y="345.70" text-anchor="end" font-family="Liberation Sans" font-size="11" fill="#666">70k</text><text x="535" y="311.30" text-anchor="end" font-family="Liberation Sans" font-size="11" fill="#666">80k</text><text x="535" y="276.90" text-anchor="end" font-family="Liberation Sans" font-size="11" fill="#666">90k</text><text x="535" y="242.50" text-anchor="end" font-family="Liberation Sans" font-size="11" fill="#666">100k</text><circle cx="1186.6" cy="247.9" r="4.8" fill="#1f77b4"/><circle cx="1186.6" cy="261.9" r="4.8" fill="#aec7e8"/><circle cx="1186.6" cy="275.9" r="4.8" fill="#ff7f0e"/></svg>
<div class="t" style="left:1193.90px;top:244.37px;font-size:10.90px;font-weight:400;color:#000;transform:scaleX(0.9214);">EROPS w AC</div>
<div class="t" style="left:1193.91px;top:258.37px;font-size:10.90px;font-weight:400;color:#000;transform:scaleX(0.8983);">EROPS</div>
<div class="t" style="left:1193.90px;top:272.37px;font-size:10.90px;font-weight:400;color:#000;transform:scaleX(0.9168);">OROPS</div>
<div class="b" style="left:251px;top:656px;width:1029px;height:42px;background:#f2f2f2"></div>
<div class="b" style="left:251px;top:656px;width:1029px;height:1px;background:#dedede"></div>
<div class="b" style="left:251px;top:657px;width:20px;height:41px;background:#f0f0f0"></div>
<div class="b" style="left:271px;top:655px;width:83px;height:43px;background:#f8f8f8"></div>
<svg class="b" style="left:0;top:0" width="1280" height="698"><line x1="270.8" y1="657" x2="270.8" y2="698" stroke="#dcdcdc" stroke-width="1"/><line x1="354.8" y1="657" x2="354.8" y2="698" stroke="#dcdcdc" stroke-width="1"/><line x1="438.7" y1="657" x2="438.7" y2="698" stroke="#dcdcdc" stroke-width="1"/><line x1="522.7" y1="657" x2="522.7" y2="698" stroke="#dcdcdc" stroke-width="1"/><line x1="606.7" y1="657" x2="606.7" y2="698" stroke="#dcdcdc" stroke-width="1"/><line x1="690.7" y1="657" x2="690.7" y2="698" stroke="#dcdcdc" stroke-width="1"/><line x1="774.6" y1="657" x2="774.6" y2="698" stroke="#dcdcdc" stroke-width="1"/><line x1="858.6" y1="657" x2="858.6" y2="698" stroke="#dcdcdc" stroke-width="1"/><line x1="942.6" y1="657" x2="942.6" y2="698" stroke="#dcdcdc" stroke-width="1"/><line x1="1026.5" y1="657" x2="1026.5" y2="698" stroke="#dcdcdc" stroke-width="1"/><line x1="1110.5" y1="657" x2="1110.5" y2="698" stroke="#dcdcdc" stroke-width="1"/><g transform="translate(338.8,661)"><rect x="0" y="2" width="11.5" height="1.6" fill="#c9c9c9"/><path d="M4 2 V0.6 H7.5 V2" stroke="#c9c9c9" stroke-width="1.1" fill="none"/><path d="M1.3 4.2 H10.2 L9.6 13.2 H1.9Z" stroke="#c9c9c9" stroke-width="1.2" fill="none"/><path d="M4 5.8 V11.6 M5.75 5.8 V11.6 M7.5 5.8 V11.6" stroke="#c9c9c9" stroke-width="1"/></g><g transform="translate(336.3,677.5)" fill="none" stroke="#c9c9c9" stroke-width="1.2"><path d="M0.6 3.5 L3.5 0.6 H8 V4.5"/><path d="M0.6 3.5 V10.5 H5"/><path d="M5.2 7.5 L8 4.6 H13.4 V14.6 H5.2Z"/></g><g transform="translate(422.77,661)"><rect x="0" y="2" width="11.5" height="1.6" fill="#c9c9c9"/><path d="M4 2 V0.6 H7.5 V2" stroke="#c9c9c9" stroke-width="1.1" fill="none"/><path d="M1.3 4.2 H10.2 L9.6 13.2 H1.9Z" stroke="#c9c9c9" stroke-width="1.2" fill="none"/><path d="M4 5.8 V11.6 M5.75 5.8 V11.6 M7.5 5.8 V11.6" stroke="#c9c9c9" stroke-width="1"/></g><g transform="translate(420.27,677.5)" fill="none" stroke="#c9c9c9" stroke-width="1.2"><path d="M0.6 3.5 L3.5 0.6 H8 V4.5"/><path d="M0.6 3.5 V10.5 H5"/><path d="M5.2 7.5 L8 4.6 H13.4 V14.6 H5.2Z"/></g><g transform="translate(506.74,661)"><rect x="0" y="2" width="11.5" height="1.6" fill="#c9c9c9"/><path d="M4 2 V0.6 H7.5 V2" stroke="#c9c9c9" stroke-width="1.1" fill="none"/><path d="M1.3 4.2 H10.2 L9.6 13.2 H1.9Z" stroke="#c9c9c9" stroke-width="1.2" fill="none"/><path d="M4 5.8 V11.6 M5.75 5.8 V11.6 M7.5 5.8 V11.6" stroke="#c9c9c9" stroke-width="1"/></g><g transform="translate(504.24,677.5)" fill="none" stroke="#c9c9c9" stroke-width="1.2"><path d="M0.6 3.5 L3.5 0.6 H8 V4.5"/><path d="M0.6 3.5 V10.5 H5"/><path d="M5.2 7.5 L8 4.6 H13.4 V14.6 H5.2Z"/></g><g transform="translate(590.71,661)"><rect x="0" y="2" width="11.5" height="1.6" fill="#c9c9c9"/><path d="M4 2 V0.6 H7.5 V2" stroke="#c9c9c9" stroke-width="1.1" fill="none"/><path d="M1.3 4.2 H10.2 L9.6 13.2 H1.9Z" stroke="#c9c9c9" stroke-width="1.2" fill="none"/><path d="M4 5.8 V11.6 M5.75 5.8 V11.6 M7.5 5.8 V11.6" stroke="#c9c9c9" stroke-width="1"/></g><g transform="translate(588.21,677.5)" fill="none" stroke="#c9c9c9" stroke-width="1.2"><path d="M0.6 3.5 L3.5 0.6 H8 V4.5"/><path d="M0.6 3.5 V10.5 H5"/><path d="M5.2 7.5 L8 4.6 H13.4 V14.6 H5.2Z"/></g><g transform="translate(674.6800000000001,661)"><rect x="0" y="2" width="11.5" height="1.6" fill="#c9c9c9"/><path d="M4 2 V0.6 H7.5 V2" stroke="#c9c9c9" stroke-width="1.1" fill="none"/><path d="M1.3 4.2 H10.2 L9.6 13.2 H1.9Z" stroke="#c9c9c9" stroke-width="1.2" fill="none"/><path d="M4 5.8 V11.6 M5.75 5.8 V11.6 M7.5 5.8 V11.6" stroke="#c9c9c9" stroke-width="1"/></g><g transform="translate(672.1800000000001,677.5)" fill="none" stroke="#c9c9c9" stroke-width="1.2"><path d="M0.6 3.5 L3.5 0.6 H8 V4.5"/><path d="M0.6 3.5 V10.5 H5"/><path d="M5.2 7.5 L8 4.6 H13.4 V14.6 H5.2Z"/></g><g transform="translate(758.6500000000001,661)"><rect x="0" y="2" width="11.5" height="1.6" fill="#c9c9c9"/><path d="M4 2 V0.6 H7.5 V2" stroke="#c9c9c9" stroke-width="1.1" fill="none"/><path d="M1.3 4.2 H10.2 L9.6 13.2 H1.9Z" stroke="#c9c9c9" stroke-width="1.2" fill="none"/><path d="M4 5.8 V11.6 M5.75 5.8 V11.6 M7.5 5.8 V11.6" stroke="#c9c9c9" stroke-width="1"/></g><g transform="translate(756.1500000000001,677.5)" fill="none" stroke="#c9c9c9" stroke-width="1.2"><path d="M0.6 3.5 L3.5 0.6 H8 V4.5"/><path d="M0.6 3.5 V10.5 H5"/><path d="M5.2 7.5 L8 4.6 H13.4 V14.6 H5.2Z"/></g><g transform="translate(842.62,661)"><rect x="0" y="2" width="11.5" height="1.6" fill="#c9c9c9"/><path d="M4 2 V0.6 H7.5 V2" stroke="#c9c9c9" stroke-width="1.1" fill="none"/><path d="M1.3 4.2 H10.2 L9.6 13.2 H1.9Z" stroke="#c9c9c9" stroke-width="1.2" fill="none"/><path d="M4 5.8 V11.6 M5.75 5.8 V11.6 M7.5 5.8 V11.6" stroke="#c9c9c9" stroke-width="1"/></g><g transform="translate(840.12,677.5)" fill="none" stroke="#c9c9c9" stroke-width="1.2"><path d="M0.6 3.5 L3.5 0.6 H8 V4.5"/><path d="M0.6 3.5 V10.5 H5"/><path d="M5.2 7.5 L8 4.6 H13.4 V14.6 H5.2Z"/></g><g transform="translate(926.5899999999999,661)"><rect x="0" y="2" width="11.5" height="1.6" fill="#c9c9c9"/><path d="M4 2 V0.6 H7.5 V2" stroke="#c9c9c9" stroke-width="1.1" fill="none"/><path d="M1.3 4.2 H10.2 L9.6 13.2 H1.9Z" stroke="#c9c9c9" stroke-width="1.2" fill="none"/><path d="M4 5.8 V11.6 M5.75 5.8 V11.6 M7.5 5.8 V11.6" stroke="#c9c9c9" stroke-width="1"/></g><g transform="translate(924.0899999999999,677.5)" fill="none" stroke="#c9c9c9" stroke-width="1.2"><path d="M0.6 3.5 L3.5 0.6 H8 V4.5"/><path d="M0.6 3.5 V10.5 H5"/><path d="M5.2 7.5 L8 4.6 H13.4 V14.6 H5.2Z"/></g><g transform="translate(1010.56,661)"><rect x="0" y="2" width="11.5" height="1.6" fill="#c9c9c9"/><path d="M4 2 V0.6 H7.5 V2" stroke="#c9c9c9" stroke-width="1.1" fill="none"/><path d="M1.3 4.2 H10.2 L9.6 13.2 H1.9Z" stroke="#c9c9c9" stroke-width="1.2" fill="none"/><path d="M4 5.8 V11.6 M5.75 5.8 V11.6 M7.5 5.8 V11.6" stroke="#c9c9c9" stroke-width="1"/></g><g transform="translate(1008.06,677.5)" fill="none" stroke="#c9c9c9" stroke-width="1.2"><path d="M0.6 3.5 L3.5 0.6 H8 V4.5"/><path d="M0.6 3.5 V10.5 H5"/><path d="M5.2 7.5 L8 4.6 H13.4 V14.6 H5.2Z"/></g><g transform="translate(1094.53,661)"><rect x="0" y="2" width="11.5" height="1.6" fill="#c9c9c9"/><path d="M4 2 V0.6 H7.5 V2" stroke="#c9c9c9" stroke-width="1.1" fill="none"/><path d="M1.3 4.2 H10.2 L9.6 13.2 H1.9Z" stroke="#c9c9c9" stroke-width="1.2" fill="none"/><path d="M4 5.8 V11.6 M5.75 5.8 V11.6 M7.5 5.8 V11.6" stroke="#c9c9c9" stroke-width="1"/></g><g transform="translate(1092.03,677.5)" fill="none" stroke="#c9c9c9" stroke-width="1.2"><path d="M0.6 3.5 L3.5 0.6 H8 V4.5"/><path d="M0.6 3.5 V10.5 H5"/><path d="M5.2 7.5 L8 4.6 H13.4 V14.6 H5.2Z"/></g><polyline points="277.5,668.3 278.9,670.2 280.3,673.8 281.7,665.2 283.1,668.6 284.5,678.9 285.9,676.7 287.3,673.9 288.7,673.9 290.1,672.3 291.5,674.4 292.9,675.6 294.3,669.2 295.7,677.1 297.1,675.1 298.5,675.0 299.9,670.5 301.3,671.2 302.7,677.3 304.1,666.9 305.5,678.5 306.9,673.8 308.3,672.1 309.7,669.9 311.1,673.2 312.5,674.5 313.9,677.0 315.3,674.4 316.7,677.0 318.1,677.7 319.5,675.0 320.9,676.6 322.3,669.0 323.7,677.0 325.1,666.2 326.5,670.7 327.9,669.1 329.3,677.2 330.7,673.6 332.1,675.1" fill="none" stroke="#6fa6d3" stroke-width="0.8" stroke-dasharray="1.5 1.2"/><polyline points="277.5,684.3 278.9,684.6 280.3,681.4 281.7,686.0 283.1,682.4 284.5,683.8 285.9,683.9 287.3,681.9 288.7,686.2 290.1,685.4 291.5,681.4 292.9,684.5 294.3,681.2 295.7,683.8 297.1,686.3 298.5,686.5 299.9,685.8 301.3,686.6 302.7,681.6 304.1,682.3 305.5,683.6 306.9,682.8 308.3,683.3 309.7,684.5 311.1,686.4 312.5,686.6 313.9,686.9 315.3,682.0 316.7,686.8 318.1,684.4 319.5,682.3 320.9,684.4 322.3,681.4 323.7,686.9 325.1,685.8 326.5,681.9 327.9,685.6 329.3,681.3 330.7,681.3 332.1,683.0" fill="none" stroke="#f5a25a" stroke-width="0.8" stroke-dasharray="1.5 1.2"/><rect x="362.70" y="664.4" width="1.1" height="30.6" fill="#6aa3cf"/><rect x="363.95" y="663.2" width="1.1" height="31.8" fill="#6aa3cf"/><rect x="365.20" y="668.9" width="1.1" height="26.1" fill="#6aa3cf"/><rect x="366.45" y="663.0" width="1.1" height="32.0" fill="#6aa3cf"/><rect x="367.70" y="671.3" width="1.1" height="23.7" fill="#6aa3cf"/><rect x="368.95" y="674.1" width="1.1" height="20.9" fill="#6aa3cf"/><rect x="370.20" y="667.8" width="1.1" height="27.2" fill="#6aa3cf"/><rect x="371.45" y="674.6" width="1.1" height="20.4" fill="#6aa3cf"/><rect x="372.70" y="672.6" width="1.1" height="22.4" fill="#6aa3cf"/><rect x="373.95" y="670.1" width="1.1" height="24.9" fill="#6aa3cf"/><rect x="375.20" y="659.0" width="1.1" height="36.0" fill="#6aa3cf"/><rect x="376.45" y="673.1" width="1.1" height="21.9" fill="#6aa3cf"/><rect x="377.70" y="674.5" width="1.1" height="20.5" fill="#6aa3cf"/><rect x="378.95" y="664.6" width="1.1" height="30.4" fill="#6aa3cf"/><rect x="380.20" y="671.2" width="1.1" height="23.8" fill="#6aa3cf"/><rect x="381.45" y="663.5" width="1.1" height="31.5" fill="#6aa3cf"/><rect x="382.70" y="664.2" width="1.1" height="30.8" fill="#6aa3cf"/><rect x="383.95" y="670.5" width="1.1" height="24.5" fill="#6aa3cf"/><rect x="385.20" y="669.5" width="1.1" height="25.5" fill="#6aa3cf"/><rect x="386.45" y="668.8" width="1.1" height="26.2" fill="#6aa3cf"/><rect x="387.70" y="667.3" width="1.1" height="27.7" fill="#6aa3cf"/><rect x="388.95" y="667.9" width="1.1" height="27.1" fill="#6aa3cf"/><rect x="390.20" y="668.3" width="1.1" height="26.7" fill="#6aa3cf"/><rect x="391.45" y="667.6" width="1.1" height="27.4" fill="#6aa3cf"/><rect x="392.70" y="663.7" width="1.1" height="31.3" fill="#6aa3cf"/><rect x="393.95" y="668.9" width="1.1" height="26.1" fill="#6aa3cf"/><rect x="395.20" y="669.8" width="1.1" height="25.2" fill="#6aa3cf"/><rect x="396.45" y="666.4" width="1.1" height="28.6" fill="#6aa3cf"/><rect x="397.70" y="672.1" width="1.1" height="22.9" fill="#6aa3cf"/><rect x="398.95" y="671.4" width="1.1" height="23.6" fill="#6aa3cf"/><rect x="400.20" y="663.3" width="1.1" height="31.7" fill="#6aa3cf"/><rect x="401.45" y="668.7" width="1.1" height="26.3" fill="#6aa3cf"/><rect x="402.70" y="668.4" width="1.1" height="26.6" fill="#6aa3cf"/><rect x="403.95" y="674.9" width="1.1" height="20.1" fill="#6aa3cf"/><rect x="405.20" y="670.0" width="1.1" height="25.0" fill="#6aa3cf"/><rect x="406.45" y="668.0" width="1.1" height="27.0" fill="#6aa3cf"/><rect x="407.70" y="674.8" width="1.1" height="20.2" fill="#6aa3cf"/><rect x="408.95" y="667.6" width="1.1" height="27.4" fill="#6aa3cf"/><rect x="410.20" y="667.4" width="1.1" height="27.6" fill="#6aa3cf"/><rect x="411.45" y="674.3" width="1.1" height="20.7" fill="#6aa3cf"/><rect x="412.70" y="667.5" width="1.1" height="27.5" fill="#6aa3cf"/><rect x="413.95" y="669.4" width="1.1" height="25.6" fill="#6aa3cf"/><rect x="444.00" y="668" width="2.38" height="27.5" fill="#6aa3cf"/><rect x="446.33" y="667" width="2.38" height="28.5" fill="#6aa3cf"/><rect x="448.67" y="670" width="2.38" height="25.5" fill="#6aa3cf"/><rect x="452.00" y="667" width="1.88" height="28.5" fill="#6aa3cf"/><rect x="453.82" y="666" width="1.88" height="29.5" fill="#6aa3cf"/><rect x="455.65" y="665" width="1.88" height="30.5" fill="#6aa3cf"/><rect x="457.48" y="664" width="1.88" height="31.5" fill="#6aa3cf"/><rect x="460.60" y="664" width="1.65" height="31.5" fill="#6aa3cf"/><rect x="462.20" y="666" width="1.65" height="29.5" fill="#6aa3cf"/><rect x="463.80" y="665" width="1.65" height="30.5" fill="#6aa3cf"/><rect x="465.40" y="663" width="1.65" height="32.5" fill="#6aa3cf"/><rect x="467.80" y="664" width="2.05" height="31.5" fill="#6aa3cf"/><rect x="469.80" y="666" width="2.05" height="29.5" fill="#6aa3cf"/><rect x="471.80" y="665" width="2.05" height="30.5" fill="#6aa3cf"/><rect x="473.80" y="663" width="2.05" height="32.5" fill="#6aa3cf"/><rect x="477.10" y="670" width="2.02" height="25.5" fill="#6aa3cf"/><rect x="479.07" y="668" width="2.02" height="27.5" fill="#6aa3cf"/><rect x="481.03" y="665" width="2.02" height="30.5" fill="#6aa3cf"/><rect x="484.50" y="664" width="2.05" height="31.5" fill="#6aa3cf"/><rect x="486.50" y="662" width="2.05" height="33.5" fill="#6aa3cf"/><rect x="488.50" y="663" width="2.05" height="32.5" fill="#6aa3cf"/><rect x="490.50" y="666" width="2.05" height="29.5" fill="#6aa3cf"/><rect x="493.20" y="668" width="2.25" height="27.5" fill="#6aa3cf"/><rect x="495.40" y="670" width="2.25" height="25.5" fill="#6aa3cf"/><rect x="497.60" y="667" width="2.25" height="28.5" fill="#6aa3cf"/><path d="M543.86 684.39 A14.0 14.0 0 1 1 569.96 675.65 L564.02 676.49 A8.0 8.0 0 1 0 549.10 681.48Z" fill="#5fbd7c"/><path d="M570.05 676.38 A14.0 14.0 0 0 1 555.86 691.60 L555.96 685.60 A8.0 8.0 0 0 0 564.07 676.90Z" fill="#8fd3a3"/><path d="M555.12 691.57 A14.0 14.0 0 0 1 544.36 685.22 L549.39 681.96 A8.0 8.0 0 0 0 555.54 685.58Z" fill="#c2e6cc"/><rect x="628.0" y="665.8" width="7.8" height="3.7" fill="#5fbd7c"/><rect x="636.2" y="665.8" width="7.8" height="3.7" fill="#a3dbb3"/><rect x="644.4" y="665.8" width="7.8" height="3.7" fill="#c4e8cf"/><rect x="628.0" y="669.8" width="7.8" height="3.7" fill="#6cc387"/><rect x="636.2" y="669.8" width="7.8" height="3.7" fill="#5fbd7c"/><rect x="644.4" y="669.8" width="7.8" height="3.7" fill="#5fbd7c"/><rect x="628.0" y="673.9" width="7.8" height="3.7" fill="#7fcb95"/><rect x="636.2" y="673.9" width="7.8" height="3.7" fill="#a3dbb3"/><rect x="644.4" y="673.9" width="7.8" height="3.7" fill="#c4e8cf"/><rect x="628.0" y="677.9" width="7.8" height="3.7" fill="#5fbd7c"/><rect x="636.2" y="677.9" width="7.8" height="3.7" fill="#a3dbb3"/><rect x="644.4" y="677.9" width="7.8" height="3.7" fill="#7fcb95"/><rect x="628.0" y="682.0" width="7.8" height="3.7" fill="#8fd3a3"/><rect x="636.2" y="682.0" width="7.8" height="3.7" fill="#7fcb95"/><rect x="644.4" y="682.0" width="7.8" height="3.7" fill="#a3dbb3"/><rect x="628.0" y="686.0" width="7.8" height="3.7" fill="#6cc387"/><rect x="636.2" y="686.0" width="7.8" height="3.7" fill="#a3dbb3"/><rect x="644.4" y="686.0" width="7.8" height="3.7" fill="#a3dbb3"/><line x1="701.5" y1="668" x2="701.5" y2="693" stroke="#7cc35b" stroke-width="1" stroke-dasharray="2 1"/><line x1="705.5" y1="661" x2="705.5" y2="693" stroke="#7cc35b" stroke-width="1" stroke-dasharray="2 1"/><line x1="709.5" y1="663" x2="709.5" y2="693" stroke="#7cc35b" stroke-width="1" stroke-dasharray="2 1"/><line x1="713.5" y1="667" x2="713.5" y2="693" stroke="#7cc35b" stroke-width="1" stroke-dasharray="2 1"/><line x1="717.5" y1="673" x2="717.5" y2="693" stroke="#7cc35b" stroke-width="1" stroke-dasharray="2 1"/><rect x="743.6" y="684.8" width="0.8" height="0.8" fill="#c8e28a"/><rect x="744.4" y="691.8" width="0.8" height="0.8" fill="#c8e28a"/><rect x="740.5" y="685.1" width="0.8" height="0.8" fill="#c8e28a"/><rect x="735.0" y="689.2" width="0.8" height="0.8" fill="#c8e28a"/><rect x="728.1" y="686.6" width="0.8" height="0.8" fill="#c8e28a"/><rect x="740.3" y="689.2" width="0.8" height="0.8" fill="#c8e28a"/><rect x="722.9" y="688.8" width="0.8" height="0.8" fill="#c8e28a"/><rect x="748.5" y="689.4" width="0.8" height="0.8" fill="#c8e28a"/><rect x="726.7" y="690.5" width="0.8" height="0.8" fill="#c8e28a"/><rect x="748.8" y="684.6" width="0.8" height="0.8" fill="#c8e28a"/><rect x="742.3" y="685.7" width="0.8" height="0.8" fill="#c8e28a"/><rect x="737.1" y="686.2" width="0.8" height="0.8" fill="#c8e28a"/><rect x="743.6" y="684.3" width="0.8" height="0.8" fill="#c8e28a"/><rect x="748.7" y="686.5" width="0.8" height="0.8" fill="#c8e28a"/><rect x="748" y="689" width="1" height="1" fill="#e04030"/><rect x="794.0" y="683.6" width="3.6" height="4" fill="#4cb56d"/><rect x="798.6" y="673.6" width="3.6" height="14" fill="#4cb56d"/><rect x="803.2" y="676.6" width="3.6" height="11" fill="#4cb56d"/><rect x="807.8" y="673.6" width="3.6" height="14" fill="#4cb56d"/><rect x="812.4" y="679.6" width="3.6" height="8" fill="#4cb56d"/><rect x="817.0" y="683.6" width="3.6" height="4" fill="#4cb56d"/><rect x="876" y="684" width="1" height="1" fill="#6cab7a"/><rect x="879" y="682" width="1" height="1" fill="#6cab7a"/><rect x="882" y="685" width="1" height="1" fill="#6cab7a"/><rect x="884" y="681" width="1" height="1" fill="#6cab7a"/><rect x="886" y="683" width="1" height="1" fill="#6cab7a"/><rect x="889" y="684" width="1" height="1" fill="#6cab7a"/><rect x="897" y="689" width="1" height="1" fill="#6cab7a"/><rect x="905" y="682" width="1" height="1" fill="#6cab7a"/><rect x="907" y="685" width="1" height="1" fill="#6cab7a"/><rect x="958" y="688" width="1" height="1" fill="#a6d96a"/><rect x="962" y="686" width="1" height="1" fill="#a6d96a"/><rect x="966" y="688" width="1" height="1" fill="#a6d96a"/><rect x="970" y="687" width="1" height="1" fill="#a6d96a"/><path d="M1048 689 Q1054 672 1071.5 666.5" stroke="#5cbf7e" stroke-width="0.9" fill="none"/><path d="M1048 689 L1071.5 666.5" stroke="#cfcfcf" stroke-width="0.6"/></svg>
<div class="b" style="left:1123px;top:665px;width:60px;height:26px;background:#7dbc42"></div>
<svg class="b" style="left:1128px;top:673px" width="12" height="12" viewBox="0 0 12 12"><path d="M4.2 0.5 H7.3 V4.2 H11 V7.3 H7.3 V11 H4.2 V7.3 H0.5 V4.2 H4.2Z" fill="#fff"/></svg>
<div class="t" style="left:1141.21px;top:672.86px;font-size:12.21px;font-weight:700;color:#fff;transform:scaleX(0.8120);">CHART</div>
</body></html>
